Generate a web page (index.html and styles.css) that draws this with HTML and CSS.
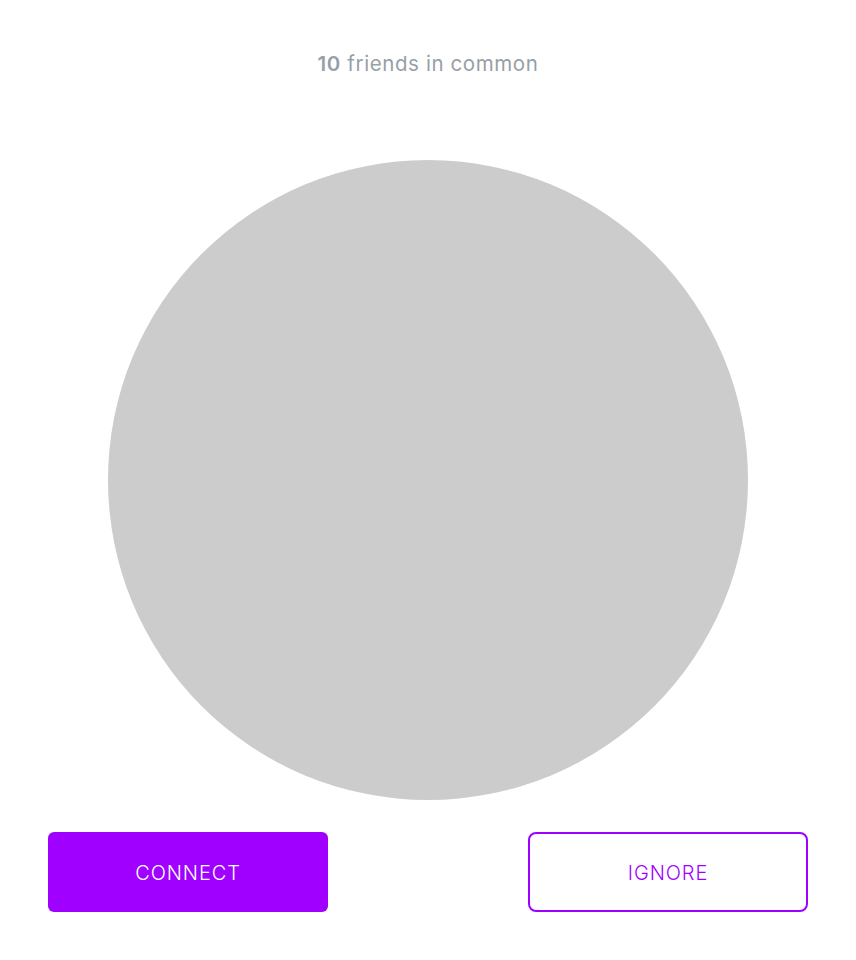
FILE: index.html
```html
<!DOCTYPE html>
<html>
<head>
<meta charset="utf-8">
<link rel="stylesheet" href="styles.css">
</head>
<body>
<div class="page">
  <p class="common"><span class="count">10</span> friends in common</p>
  <div class="avatar"></div>
  <div class="actions">
    <button class="btn btn-primary">CONNECT</button>
    <button class="btn btn-outline">IGNORE</button>
  </div>
</div>
</body>
</html>
```
FILE: styles.css
```css
html, body {
  margin: 0;
  padding: 0;
  background: #ffffff;
}
.page {
  width: 856px;
  box-sizing: border-box;
  padding: 52px 48px 0;
  display: flex;
  flex-direction: column;
  align-items: center;
  font-family: Inter, "Noto Sans", sans-serif;
}
.common {
  margin: 0;
  font-size: 20.5px;
  line-height: 24px;
  color: #979fa7;
  font-weight: 400;
  letter-spacing: 0.6px;
}
.count {
  font-weight: 600;
}
.avatar {
  margin-top: 84px;
  width: 640px;
  height: 640px;
  border-radius: 50%;
  background: #cccccc;
}
.actions {
  margin-top: 32px;
  width: 100%;
  display: flex;
  justify-content: space-between;
}
.btn {
  width: 280px;
  height: 80px;
  border-radius: 6px;
  font-family: Inter, "Noto Sans", sans-serif;
  font-size: 20px;
  font-weight: 300;
  letter-spacing: 0.9px;
  box-sizing: border-box;
  padding: 2px 0 0;
  cursor: pointer;
}
.btn-primary {
  background: #9f00ff;
  color: #ffffff;
  border: none;
}
.btn-outline {
  background: #ffffff;
  color: #9f00ff;
  border: 2px solid #9f00ff;
  border-radius: 8px;
}
```
